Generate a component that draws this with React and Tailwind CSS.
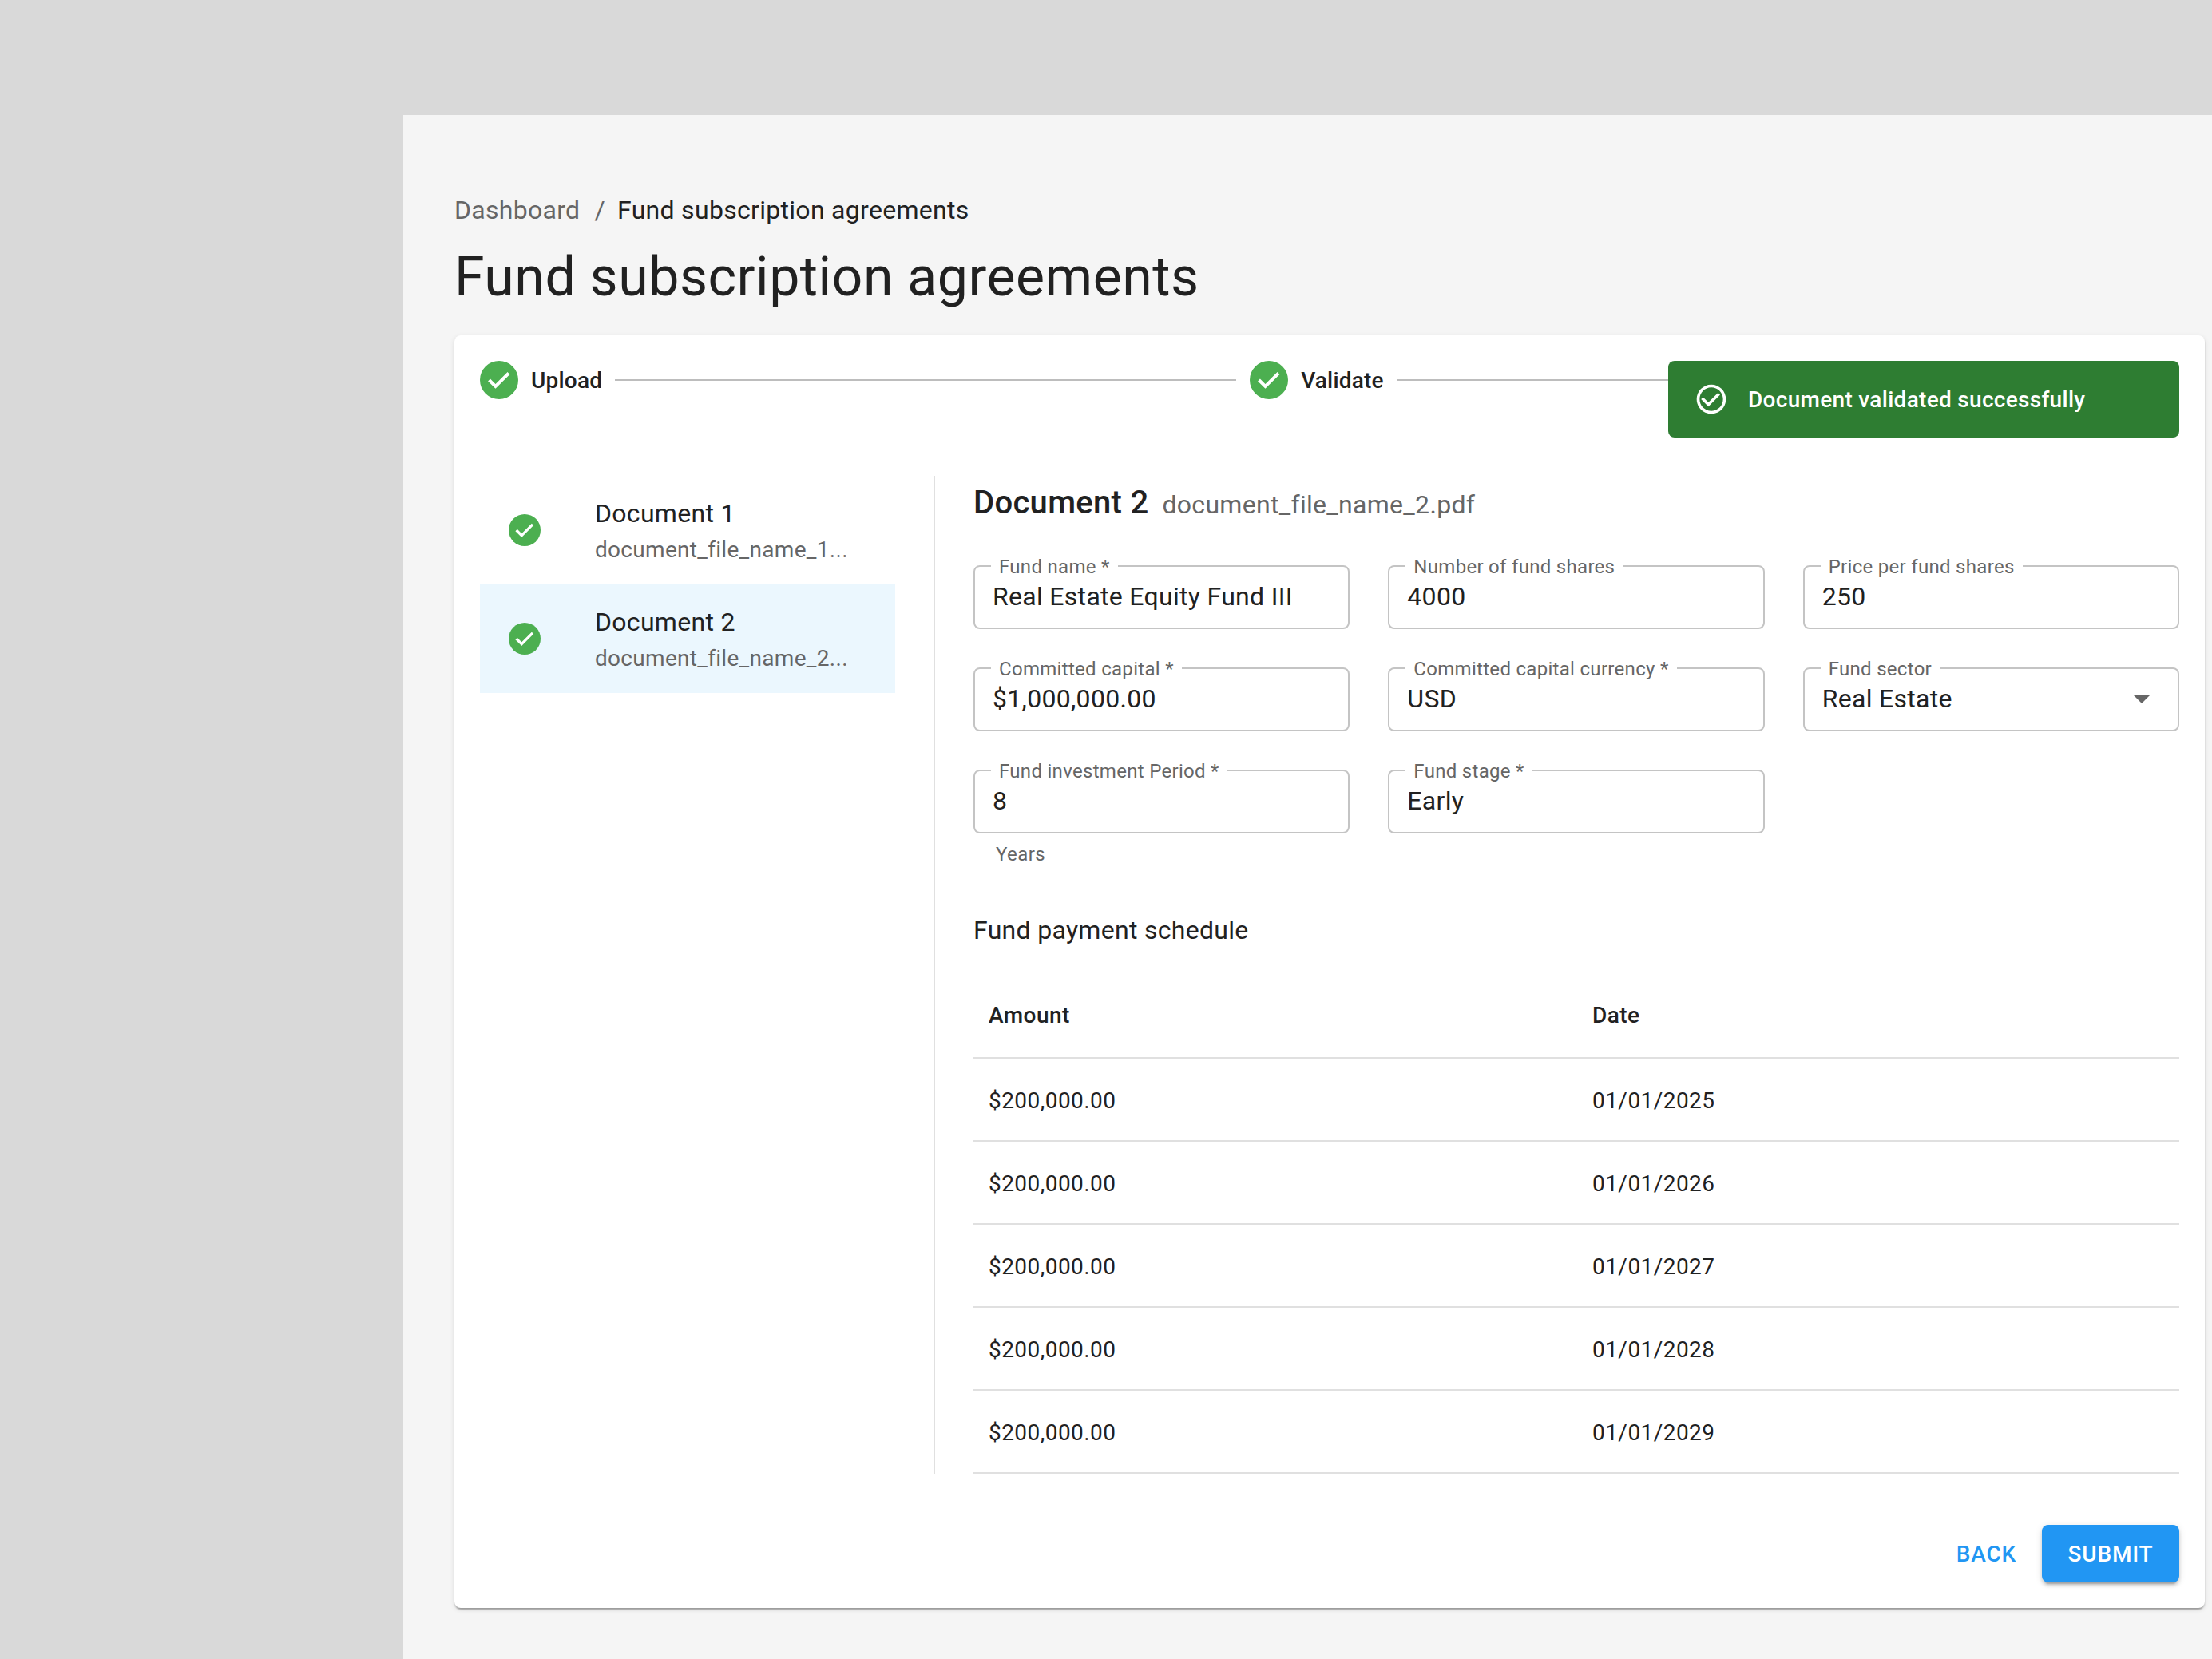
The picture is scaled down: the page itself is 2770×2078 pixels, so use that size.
import React from 'react';

const Check = ({ className }) => (
  <svg viewBox="0 0 48 48" className={className}>
    <circle cx="24" cy="24" r="24" fill="#4caf50" />
    <path d="M11.5 24l8 8L36 15.5" fill="none" stroke="#fff" strokeWidth="4" />
  </svg>
);

const Field = ({ label, value, select }) => (
  <div className="relative h-[80px] rounded-[8px] border-2 border-[#c4c4c4] flex items-center pl-[22px] pr-[24px] pb-[2px] text-[32px] leading-[44px] text-[#212121] tracking-[0.3px]">
    <span className="absolute left-[20px] top-[-16px] bg-white px-[10px] text-[24px] leading-[32px] text-[#666666] whitespace-nowrap">
      {label}
    </span>
    <span className="flex-1">{value}</span>
    {select && (
      <svg viewBox="0 0 24 24" className="w-[48px] h-[48px] mr-[-3px]" fill="#666666">
        <path d="M7 10l5 5 5-5z" />
      </svg>
    )}
  </div>
);

const rows = [
  ['$200,000.00', '01/01/2025'],
  ['$200,000.00', '01/01/2026'],
  ['$200,000.00', '01/01/2027'],
  ['$200,000.00', '01/01/2028'],
  ['$200,000.00', '01/01/2029'],
];

const App = () => {
  return (
    <div className="w-[2770px] h-[2078px] overflow-hidden bg-[#d9d9d9] pt-[144px] pl-[505px] font-['Roboto',sans-serif] text-[#212121]">
      <div className="h-full bg-[#f5f5f5] pl-[64px] pr-[9px] pt-[95px]">
        {/* Breadcrumb */}
        <div className="flex items-center h-[48px] text-[32px] tracking-[0.3px]">
          <span className="text-[#666666]">Dashboard</span>
          <span className="text-[#666666] ml-[18px] mr-[15px]">/</span>
          <span>Fund subscription agreements</span>
        </div>
        <h1 className="mt-[20px] h-[80px] text-[68px] leading-[80px] tracking-[0.5px] font-normal">
          Fund subscription agreements
        </h1>

        <div className="relative mt-[33px] h-[1594px] rounded-[8px] bg-white p-[32px] shadow-[0_4px_2px_-2px_rgba(0,0,0,0.2),0_2px_2px_0_rgba(0,0,0,0.14),0_2px_6px_0_rgba(0,0,0,0.12)]">
          {/* Stepper */}
          <div className="flex items-center h-[48px] text-[28px] font-medium tracking-[0.2px]">
            <Check className="w-[48px] h-[48px] shrink-0" />
            <span className="ml-[16px] pt-[1px]">Upload</span>
            <div className="ml-[16px] w-[778px] h-[2px] bg-[#bdbdbd]" />
            <Check className="ml-[17px] w-[48px] h-[48px] shrink-0" />
            <span className="ml-[16px] pt-[1px]">Validate</span>
            <div className="ml-[16px] flex-1 h-[2px] bg-[#bdbdbd]" />
          </div>

          {/* Toast */}
          <div className="absolute top-[32px] right-[32px] w-[640px] h-[96px] rounded-[8px] bg-[#2e7d32] flex items-center pl-[32px] text-white text-[28px] font-medium tracking-[0.3px]">
            <svg viewBox="0 0 24 24" className="w-[44px] h-[44px] shrink-0" fill="#fff">
              <path d="M16.59 7.58 10 14.17l-3.59-3.58L5 12l5 5 8-8zM12 2C6.48 2 2 6.48 2 12s4.48 10 10 10 10-4.48 10-10S17.52 2 12 2zm0 18c-4.42 0-8-3.58-8-8s3.58-8 8-8 8 3.58 8 8-3.58 8-8 8z" />
            </svg>
            <span className="ml-[24px] pt-[1px]">Document validated successfully</span>
          </div>

          <div className="flex mt-[96px]">
            {/* Document list */}
            <div className="w-[570px] shrink-0 border-r-2 border-[#e0e0e0] h-[1250px]">
              <div className="w-[520px]">
                <div className="flex items-center h-[136px] pl-[36px]">
                  <Check className="w-[40px] h-[40px] shrink-0" />
                  <div className="ml-[68px]">
                    <div className="text-[32px] leading-[48px] tracking-[0.3px]">Document 1</div>
                    <div className="mt-[2px] text-[28px] leading-[40px] tracking-[0.3px] text-[#666666]">document_file_name_1...</div>
                  </div>
                </div>
                <div className="flex items-center h-[136px] pl-[36px] bg-[#ebf7fe]">
                  <Check className="w-[40px] h-[40px] shrink-0" />
                  <div className="ml-[68px]">
                    <div className="text-[32px] leading-[48px] tracking-[0.3px]">Document 2</div>
                    <div className="mt-[2px] text-[28px] leading-[40px] tracking-[0.3px] text-[#666666]">document_file_name_2...</div>
                  </div>
                </div>
              </div>
            </div>

            {/* Document details */}
            <div className="flex-1 pl-[48px]">
              <div className="flex items-baseline h-[40px] mt-[12px]">
                <span className="text-[40px] leading-[40px] font-medium tracking-[0.3px]">Document 2</span>
                <span className="ml-[17px] text-[32px] tracking-[0.3px] text-[#666666]">document_file_name_2.pdf</span>
              </div>

              <div className="mt-[60px] grid grid-cols-3 gap-x-[48px] gap-y-[48px]">
                <Field label="Fund name *" value="Real Estate Equity Fund III" />
                <Field label="Number of fund shares" value="4000" />
                <Field label="Price per fund shares" value="250" />
                <Field label="Committed capital *" value="$1,000,000.00" />
                <Field label="Committed capital currency *" value="USD" />
                <Field label="Fund sector" value="Real Estate" select />
                <div>
                  <Field label="Fund investment Period *" value="8" />
                  <div className="mt-[10px] ml-[28px] text-[24px] leading-[32px] tracking-[0.4px] text-[#666666]">Years</div>
                </div>
                <Field label="Fund stage *" value="Early" />
              </div>

              <div className="mt-[55px] text-[32px] leading-[48px] tracking-[0.3px]">Fund payment schedule</div>

              <div className="mt-[30px] text-[28px] tracking-[0.45px]">
                <div className="grid grid-cols-[756px_1fr] h-[107px] items-center pl-[19px] font-medium border-b-2 border-[#e0e0e0]">
                  <span>Amount</span>
                  <span>Date</span>
                </div>
                {rows.map((row) => (
                  <div key={row[1]} className="grid grid-cols-[756px_1fr] h-[104px] items-center pl-[19px] pt-[4px] border-b-2 border-[#e0e0e0]">
                    <span>{row[0]}</span>
                    <span>{row[1]}</span>
                  </div>
                ))}
              </div>
            </div>
          </div>

          {/* Actions */}
          <div className="absolute right-[32px] bottom-[32px] flex items-center gap-[32px] text-[28px] font-medium tracking-[0.8px]">
            <button className="text-[#2196f3] pt-[1px]">BACK</button>
            <button className="w-[172px] h-[72px] pt-[1px] rounded-[8px] bg-[#2196f3] text-white shadow-[0_6px_2px_-4px_rgba(0,0,0,0.2),0_4px_4px_0_rgba(0,0,0,0.14),0_2px_10px_0_rgba(0,0,0,0.12)]">
              SUBMIT
            </button>
          </div>
        </div>
      </div>
    </div>
  );
};

export default App;
